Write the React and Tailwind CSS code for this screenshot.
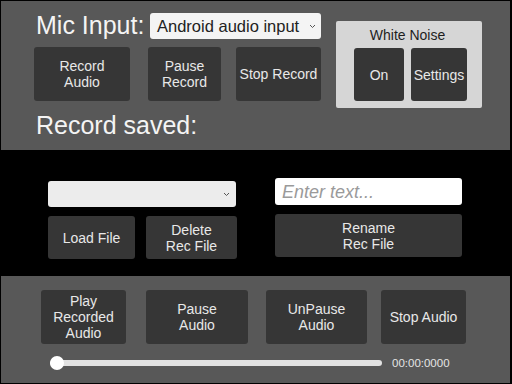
import React from "react";

const font = { fontFamily: '"Liberation Sans", Arial, sans-serif' };

function Btn({ w, h, children, className = "" }) {
  return (
    <div
      className={`flex items-center justify-center text-center rounded-[3px] bg-[#363636] text-[#e8e8e8] text-[14px] leading-[16px] shrink-0 ${className}`}
      style={{ width: w, height: h }}
    >
      <span>{children}</span>
    </div>
  );
}

function Chevron({ className = "" }) {
  return (
    <svg width="7" height="5" viewBox="0 0 7 5" className={className}>
      <polyline points="1,1 3.5,3.5 6,1" fill="none" stroke="#555" strokeWidth="1" />
    </svg>
  );
}

export default function App() {
  return (
    <div className="w-[512px] h-[384px] bg-black flex flex-col pt-[1px] px-[1px] overflow-hidden" style={font}>
      {/* Top panel */}
      <div className="w-[509px] h-[149px] bg-[#585858] flex shrink-0">
        <div className="flex flex-col pl-[33px]">
          <div className="flex items-start mt-[12px] h-[26px]">
            <span className="ml-[2px] w-[112px] text-[25px] leading-[24px] text-[#f4f4f4] whitespace-nowrap">Mic Input:</span>
            <div className="ml-[2px] w-[171px] h-[26px] bg-[#f4f4f4] rounded-[3px] flex items-center pl-[7px] pr-[5px]">
              <span className="text-[16.5px] leading-[20px] text-[#222] flex-1 whitespace-nowrap">Android audio input</span>
              <Chevron />
            </div>
          </div>
          <div className="flex mt-[8px]">
            <Btn w={96} h={54}>Record<br />Audio</Btn>
            <Btn w={73} h={54} className="ml-[18px]">Pause<br />Record</Btn>
            <Btn w={85} h={54} className="ml-[15px]">Stop Record</Btn>
          </div>
          <div className="ml-[2px] mt-[12px] text-[25px] leading-[25px] text-[#f4f4f4] whitespace-nowrap">Record saved:</div>
        </div>
        <div className="ml-[15px] mt-[20px] w-[146px] h-[87px] bg-[#d6d6d6] rounded-[2px] flex flex-col">
          <div className="pt-[6px] text-[14px] leading-[16px] text-[#1e1e1e] text-center pr-[3px]">White Noise</div>
          <div className="flex mt-[5px] pl-[18px]">
            <Btn w={50} h={53}>On</Btn>
            <Btn w={56} h={53} className="ml-[7px]">Settings</Btn>
          </div>
        </div>
      </div>

      {/* Middle section */}
      <div className="h-[126px] flex pl-[47px] shrink-0">
        <div className="flex flex-col pt-[31px]">
          <div className="w-[188px] h-[26px] bg-[#ececec] rounded-[3px] flex items-center justify-end pr-[6px]">
            <Chevron />
          </div>
          <div className="flex mt-[9px]">
            <Btn w={87} h={43}>Load File</Btn>
            <Btn w={91} h={43} className="ml-[11px]">Delete<br />Rec File</Btn>
          </div>
        </div>
        <div className="flex flex-col ml-[38px] pt-[28px]">
          <div className="w-[187px] h-[27px] bg-white rounded-[3px] flex items-center pl-[7px]">
            <span className="text-[18px] leading-[20px] italic text-[#9a9a9a]">Enter text...</span>
          </div>
          <Btn w={187} h={43} className="mt-[9px]">Rename<br />Rec File</Btn>
        </div>
      </div>

      {/* Bottom panel */}
      <div className="w-[509px] h-[107px] bg-[#585858] flex flex-col shrink-0">
        <div className="flex mt-[14px] pl-[40px]">
          <Btn w={85} h={54}>Play<br />Recorded<br />Audio</Btn>
          <Btn w={102} h={54} className="ml-[20px]">Pause<br />Audio</Btn>
          <Btn w={101} h={54} className="ml-[18px]">UnPause<br />Audio</Btn>
          <Btn w={85} h={54} className="ml-[14px]">Stop Audio</Btn>
        </div>
        <div className="flex items-center mt-[12px] pl-[49px] h-[14px]">
          <div className="relative w-[332px] h-[6px] bg-[#e2e2e2] rounded-full">
            <div className="absolute left-0 top-[-4px] w-[14px] h-[14px] rounded-full bg-white" />
          </div>
          <span className="ml-[10px] text-[11.5px] leading-[14px] text-[#e4e4e4]">00:00:0000</span>
        </div>
      </div>
    </div>
  );
}
